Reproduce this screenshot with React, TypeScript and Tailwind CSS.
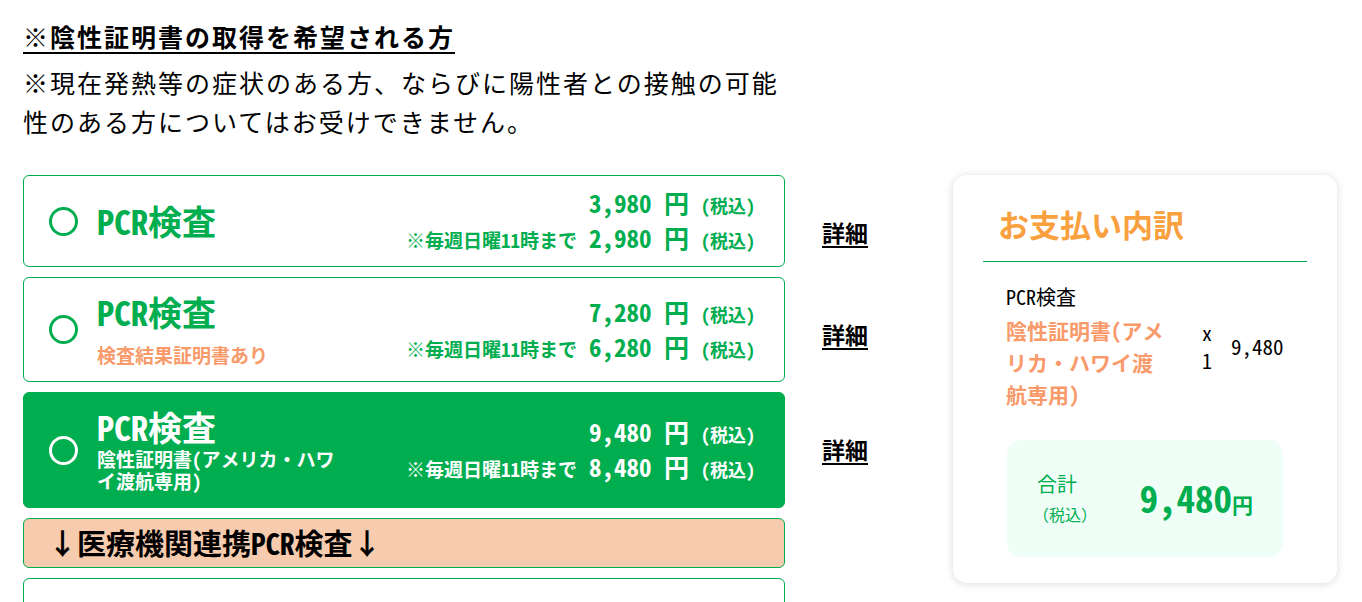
import React from 'react';

const MONO = { fontFamily: '"Noto Sans Mono CJK JP", "Noto Sans CJK JP", monospace' };
const SANS = { fontFamily: '"Noto Sans CJK JP", sans-serif' };

type Plan = {
  title: string;
  sub?: string;
  price: string;
  early: string;
  selected?: boolean;
};

const plans: Plan[] = [
  { title: 'PCR検査', price: '3,980', early: '2,980' },
  { title: 'PCR検査', sub: '検査結果証明書あり', price: '7,280', early: '6,280' },
  {
    title: 'PCR検査',
    sub: '陰性証明書(アメリカ・ハワイ渡航専用)',
    price: '9,480',
    early: '8,480',
    selected: true,
  },
];

const Radio: React.FC<{ on?: boolean }> = ({ on }) => (
  <span
    className={
      'block h-[29px] w-[29px] shrink-0 rounded-full border-[3px] bg-transparent ' +
      (on ? 'border-white' : 'border-[#00ad4f]')
    }
  />
);

const PlanCard: React.FC<{ plan: Plan }> = ({ plan }) => {
  const on = plan.selected;
  const main = on ? 'text-white' : 'text-[#00ad4f]';
  const cardHeight = on ? 'h-[116px]' : plan.sub ? 'h-[105px]' : 'h-[92px]';
  return (
    <div className="flex">
      <div
        className={
          'flex w-[762px] items-center rounded-[6px] border border-[#00ad4f] pl-[25px] pr-[29px] ' +
          cardHeight +
          ' ' +
          (on ? 'bg-[#00ad4f]' : 'bg-white')
        }
        style={MONO}
      >
        <Radio on={on} />
        <div className={'ml-[19px] flex flex-col ' + main}>
          <div className="text-[34px] font-bold leading-[38px]">{plan.title}</div>
          {plan.sub && (
            <div
              className={
                on
                  ? 'mt-[2px] w-[250px] text-[19px] font-bold leading-[22px] text-white'
                  : 'mt-[12px] text-[19px] font-bold leading-[24px] text-[#f99a6b]'
              }
            >
              {plan.sub}
            </div>
          )}
        </div>
        <div className={'ml-auto flex flex-col items-end gap-[6px] font-bold ' + main}>
          <div className="flex items-baseline leading-[26px]">
            <span className="text-[25px]">{plan.price} 円</span>
            <span className="ml-[12px] text-[18px]">(税込)</span>
          </div>
          <div className="flex items-baseline leading-[26px]">
            <span className="mr-[12px] text-[19px]">※毎週日曜11時まで</span>
            <span className="text-[25px]">{plan.early} 円</span>
            <span className="ml-[12px] text-[18px]">(税込)</span>
          </div>
        </div>
      </div>
      <div className="w-[168px] pl-[37px] pt-[44px]">
        <a
          href="#"
          className="text-[23px] font-bold leading-[26px] text-black underline decoration-[2px] underline-offset-[4px]"
          style={SANS}
        >
          詳細
        </a>
      </div>
    </div>
  );
};

const Summary: React.FC = () => (
  <div className="h-[408px] w-[384px] shrink-0 rounded-[14px] bg-white pt-[29px] shadow-[0_1px_8px_rgba(0,0,0,0.15)]">
    <div className="pl-[45px] text-[31px] font-bold leading-[40px] text-[#f9a03f]" style={SANS}>
      お支払い内訳
    </div>
    <div className="mx-[30px] mt-[17px] border-t border-[#00ad4f]" />
    <div className="mt-[22px] flex items-center pl-[53px]" style={MONO}>
      <div className="w-[162px]">
        <div className="text-[20px] leading-[26px] text-black">PCR検査</div>
        <div className="mt-[4px] text-[21px] font-bold leading-[32px] text-[#f99a6b]">
          陰性証明書(アメリカ・ハワイ渡航専用)
        </div>
      </div>
      <div className="ml-[34px] flex flex-col items-center text-[20px] leading-[28px] text-black">
        <span>x</span>
        <span>1</span>
      </div>
      <div className="ml-[19px] text-[21px] text-black">9,480</div>
    </div>
    <div className="mx-auto mt-[30px] flex h-[117px] w-[276px] items-center rounded-[14px] bg-[#effff8] pl-[30px] pr-[30px] text-[#00ad4f]">
      <div style={SANS}>
        <div className="text-[20px] leading-[30px]">合計</div>
        <div className="-ml-[4px] text-[16px] leading-[30px]">（税込）</div>
      </div>
      <div className="ml-auto flex items-baseline font-bold" style={MONO}>
        <span className="text-[37px] leading-[40px]">9,480</span>
        <span className="text-[21px]">円</span>
      </div>
    </div>
  </div>
);

export default function App() {
  return (
    <div className="min-h-screen bg-white pl-[23px] pt-[18px]">
      <div style={SANS}>
        <h2 className="text-[25px] font-bold leading-[36px] tracking-[2px] text-black underline decoration-[2px] underline-offset-[5px]">
          ※陰性証明書の取得を希望される方
        </h2>
        <p className="mt-[9px] w-[770px] text-[25px] leading-[39px] tracking-[2px] text-black">
          ※現在発熱等の症状のある方、ならびに陽性者との接触の可能性のある方についてはお受けできません。
        </p>
      </div>
      <div className="mt-[34px] flex">
        <div className="flex flex-col gap-[10px]">
          {plans.map((p, i) => (
            <PlanCard key={i} plan={p} />
          ))}
          <div className="flex">
            <div
              className="flex h-[50px] w-[762px] items-center rounded-[6px] border border-[#00ad4f] bg-[#f7cbad] pl-[24px] text-[29px] font-bold text-black"
              style={MONO}
            >
              ↓医療機関連携PCR検査↓
            </div>
          </div>
          <div className="h-[100px] w-[762px] rounded-[6px] border border-[#00ad4f] bg-white" />
        </div>
        <Summary />
      </div>
    </div>
  );
}
